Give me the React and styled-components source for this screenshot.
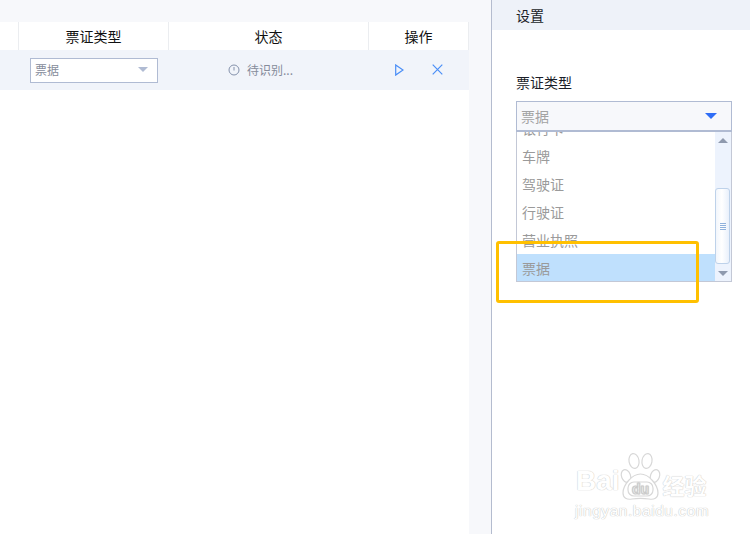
import React from "react";
import styled, { createGlobalStyle } from "styled-components";

const Global = createGlobalStyle`
  html, body { margin: 0; padding: 0; background: #fff; }
  body { font-family: "Noto Sans CJK SC", "Liberation Sans", sans-serif; }
  * { box-sizing: border-box; }
`;

const Page = styled.div`
  position: relative;
  width: 750px;
  height: 534px;
  overflow: hidden;
  display: flex;
  background: #f7f8fb;
`;
const Main = styled.main`
  width: 491px;
  padding: 22px 22px 0 0;
  display: flex;
`;
const TablePane = styled.div`
  width: 469px;
  background: #fff;
`;
const HeadRow = styled.div`
  height: 28px;
  display: grid;
  grid-template-columns: 19px 150px 200px 100px;
  font-size: 14px;
  color: #111;
`;
const HeadCell = styled.div`
  display: flex;
  align-items: center;
  justify-content: center;
  border-right: 1px solid #ebedf0;
`;
const DataRow = styled.div`
  height: 40px;
  display: grid;
  grid-template-columns: 19px 150px 200px 100px;
  align-items: center;
  background: #f1f4fa;
`;
const Cell = styled.div`
  display: flex;
  align-items: center;
  justify-content: center;
`;
const StatusCell = styled(Cell)`
  gap: 7px;
  padding-right: 17px;
`;
const MiniSelect = styled.div`
  width: 128px;
  height: 25px;
  margin-left: 11px;
  margin-right: auto;
  padding: 0 9px 2px 4px;
  display: flex;
  align-items: center;
  justify-content: space-between;
  background: #fff;
  border: 1px solid #b0bbd3;
  font-size: 12px;
  color: #868c9b;
`;
const Caret = styled.i`
  width: 0;
  height: 0;
  border-left: ${(p) => p.$w}px solid transparent;
  border-right: ${(p) => p.$w}px solid transparent;
  border-top: ${(p) => p.$h}px solid ${(p) => p.$color};
`;
const Status = styled.span`
  font-size: 12px;
  line-height: 16px;
  color: #868c9b;
`;
const ActionButton = styled.span`
  display: flex;
  color: #4a8ef7;
`;
const Actions = styled(Cell)`
  gap: 28px;
  padding-bottom: 1px;
`;

const Side = styled.aside`
  flex: 1;
  background: #fff;
  border-left: 1px solid #b4bccf;
`;
const SideTitle = styled.div`
  height: 30px;
  padding: 0 0 0 24px;
  display: flex;
  align-items: center;
  background: #eef2f9;
  font-size: 14px;
  color: #1a1e28;
`;
const SideBody = styled.div`
  padding: 42px 18px 0 24px;
`;
const Label = styled.div`
  height: 20px;
  margin-bottom: 9px;
  font-size: 14px;
  line-height: 20px;
  color: #1a1e28;
`;
const SelectBox = styled.div`
  height: 31px;
  padding: 0 14px 0 4px;
  display: flex;
  align-items: center;
  justify-content: space-between;
  background: #f7f8fb;
  border: 1px solid #b0bbd3;
  border-bottom-width: 2px;
  font-size: 14px;
  color: #a3a3a3;
`;
const Dropdown = styled.div`
  height: 150px;
  display: flex;
  overflow: hidden;
  background: #fff;
  border: 1px solid #c3c8d6;
  border-top: 0;
`;
const Options = styled.ul`
  flex: 1;
  margin: -18px 0 0;
  padding: 0;
  list-style: none;
`;
const Option = styled.li`
  height: 28px;
  padding: 0 0 0 5px;
  display: flex;
  align-items: center;
  font-size: 14px;
  color: #9a9a9a;
  background: ${(p) => (p.$selected ? "#bfe0fd" : "transparent")};
`;
const Scrollbar = styled.div`
  width: 16px;
  display: flex;
  flex-direction: column;
  align-items: center;
  background: #edf3fd;
`;
const ScrollButton = styled.div`
  height: 16px;
  flex: none;
  display: flex;
  align-items: center;
  justify-content: center;
`;
const UpCaret = styled.i`
  width: 0;
  height: 0;
  border-left: 5px solid transparent;
  border-right: 5px solid transparent;
  border-bottom: 5px solid #8f9aae;
`;
const Track = styled.div`
  flex: 1;
  width: 100%;
  padding-top: 40px;
`;
const Thumb = styled.div`
  width: 15px;
  height: 76px;
  display: flex;
  flex-direction: column;
  align-items: center;
  justify-content: center;
  gap: 1px;
  background: linear-gradient(90deg, #f2f6fc, #ffffff 45%, #e9f0fb);
  border: 1px solid #bed2ea;
  border-radius: 3px;
`;
const Grip = styled.i`
  width: 6px;
  height: 1px;
  background: #8fb1dc;
`;

const Highlight = styled.div`
  position: absolute;
  left: 496px;
  top: 241px;
  width: 203px;
  height: 62px;
  border: 3px solid #ffc000;
  border-radius: 3px;
  pointer-events: none;
`;
const Watermark = styled.div`
  position: absolute;
  left: 576px;
  top: 452px;
  width: 136px;
  pointer-events: none;
`;
const MarkTop = styled.div`
  height: 50px;
  display: flex;
  align-items: flex-end;
  font-family: "Liberation Sans", sans-serif;
  font-size: 28px;
  font-weight: 700;
  line-height: 32px;
  color: #fff;
  text-shadow: 0 0 1px #cacaca, 0 0 1px #cacaca;
`;
const MarkBai = styled.span`
  margin-bottom: 5px;
`;
const MarkCn = styled.span`
  margin-bottom: 5px;
  font-family: "Noto Sans CJK SC", sans-serif;
  font-size: 22px;
  line-height: 26px;
`;
const MarkUrl = styled.div`
  margin-left: -1px;
  font-family: "Liberation Sans", sans-serif;
  font-size: 15.5px;
  line-height: 18px;
  letter-spacing: 0.55px;
  white-space: nowrap;
  color: #fff;
  text-shadow: 0 0 1px #c4c4c4, 0 0 1px #c4c4c4;
`;

const ClockIcon = () => (
  <svg width="12" height="12" viewBox="0 0 12 12" fill="none" stroke="#8491ab" strokeWidth="1">
    <circle cx="6" cy="6" r="5" />
    <path d="M6 3V6.5" />
  </svg>
);
const PlayIcon = () => (
  <svg width="9" height="12" viewBox="0 0 9 12" fill="none" stroke="currentColor" strokeWidth="1.2">
    <path d="M.7.9 L8 6 L.7 11.100 Z" />
  </svg>
);
const CloseIcon = () => (
  <svg width="11" height="11" viewBox="0 0 11 11" fill="none" stroke="currentColor" strokeWidth="1.2">
    <path d="M.7.7 10.300 10.300M10.300.7.7 10.300" />
  </svg>
);
const Paw = () => (
  <svg width="41" height="50" viewBox="0 0 41 50" fill="#fff" stroke="#d8d8d8" strokeWidth="1.2" style={{ margin: "0 2px 0 0", flex: "none" }}>
    <ellipse cx="6" cy="24" rx="4.5" ry="6.5" transform="rotate(-20 6 24)" />
    <ellipse cx="14" cy="9" rx="5" ry="7.5" transform="rotate(-10 14 9)" />
    <ellipse cx="27" cy="9" rx="5" ry="7.5" transform="rotate(10 27 9)" />
    <ellipse cx="35" cy="24" rx="4.5" ry="6.5" transform="rotate(20 35 24)" />
    <path d="M3 41c0-8 9-19 17.500-19s17.500 11 17.500 19c0 5-4 7-9 6-6-1-11-1-17 0-5 1-9-1-9-6z" />
    <rect x="8" y="30" width="25" height="14" rx="6" fill="none" />
    <text x="20.500" y="42" fontSize="14" fontWeight="700" textAnchor="middle" fontFamily="Liberation Sans" fill="#fff" stroke="#cacaca" strokeWidth="0.6">du</text>
  </svg>
);

export default function App() {
  return (
    <Page>
      <Global />
      <Main>
        <TablePane>
          <HeadRow>
            <HeadCell />
            <HeadCell>票证类型</HeadCell>
            <HeadCell>状态</HeadCell>
            <HeadCell>操作</HeadCell>
          </HeadRow>
          <DataRow>
            <div />
            <Cell>
              <MiniSelect>
                票据
                <Caret $w={5} $h={5} $color="#b0bbd3" />
              </MiniSelect>
            </Cell>
            <StatusCell>
              <ClockIcon />
              <Status>待识别...</Status>
            </StatusCell>
            <Actions>
              <ActionButton><PlayIcon /></ActionButton>
              <ActionButton><CloseIcon /></ActionButton>
            </Actions>
          </DataRow>
        </TablePane>
      </Main>
      <Side>
        <SideTitle>设置</SideTitle>
        <SideBody>
          <Label>票证类型</Label>
          <SelectBox>
            票据
            <Caret $w={6} $h={6} $color="#2f6df6" />
          </SelectBox>
          <Dropdown>
            <Options>
              <Option>银行卡</Option>
              <Option>车牌</Option>
              <Option>驾驶证</Option>
              <Option>行驶证</Option>
              <Option>营业执照</Option>
              <Option $selected>票据</Option>
            </Options>
            <Scrollbar>
              <ScrollButton><UpCaret /></ScrollButton>
              <Track>
                <Thumb><Grip /><Grip /><Grip /><Grip /></Thumb>
              </Track>
              <ScrollButton><Caret $w={5} $h={5} $color="#8f9aae" /></ScrollButton>
            </Scrollbar>
          </Dropdown>
        </SideBody>
      </Side>
      <Highlight />
      <Watermark>
        <MarkTop><MarkBai>Bai</MarkBai><Paw /><MarkCn>经验</MarkCn></MarkTop>
        <MarkUrl>jingyan.baidu.com</MarkUrl>
      </Watermark>
    </Page>
  );
}
